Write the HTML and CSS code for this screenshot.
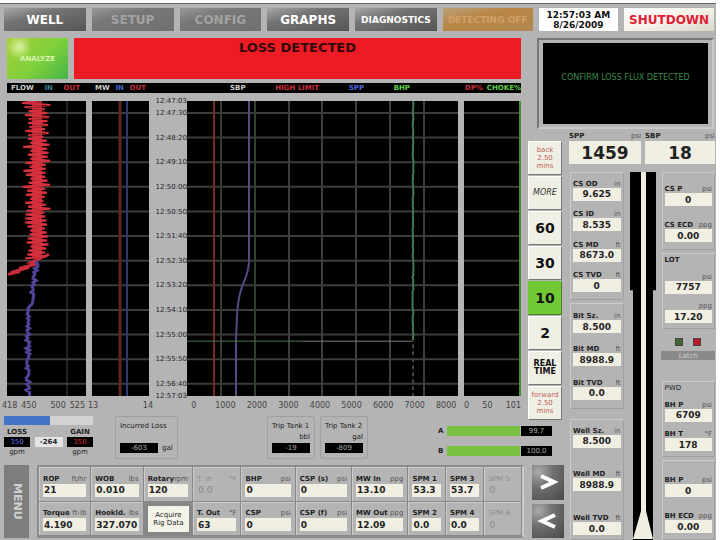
FILE: index.html
```html
<!DOCTYPE html>
<html lang="en">
<head>
<meta charset="utf-8">
<title>Drilling control – Graphs</title>
<link rel="stylesheet" href="styles.css">
</head>
<body>
<div class="app">
  <nav class="topbar">
    <button class="tab">WELL</button>
    <button class="tab dim">SETUP</button>
    <button class="tab dim">CONFIG</button>
    <button class="tab">GRAPHS</button>
    <button class="tab small">DIAGNOSTICS</button>
    <button class="tab small amber">DETECTING OFF</button>
    <time class="clock">12:57:03 AM<br>8/26/2009</time>
    <button class="tab shutdown">SHUTDOWN</button>
  </nav>

  <main class="main">
    <section class="graphs">
      <div class="banner">
        <button class="ack">ANALYZE</button>
        <h1 class="alert">LOSS DETECTED</h1>
      </div>
      <div class="legend columns">
        <div class="keys flow"><span>FLOW</span><span class="teal">IN</span><span class="red">OUT</span></div>
        <div class="keys mw"><span>MW</span><span class="blue">IN</span><span class="red">OUT</span></div>
        <div class="keys press"><span>SBP</span><span class="red">HIGH LIMIT</span><span class="blue">SPP</span><span class="green">BHP</span></div>
        <div class="keys choke"><span class="red">DP%</span><span class="green">CHOKE%</span></div>
      </div>
      <div class="plots columns">
        <svg class="plot flow" id="flow" viewBox="0 0 79 296" preserveAspectRatio="none"></svg>
        <svg class="plot mw" id="mw" viewBox="0 0 57 296" preserveAspectRatio="none"></svg>
        <div class="times">
          <span>12:47:03</span><span>12:47:30</span><span>12:48:20</span><span>12:49:10</span><span>12:50:00</span><span>12:50:50</span><span>12:51:40</span><span>12:52:30</span><span>12:53:20</span><span>12:54:10</span><span>12:55:00</span><span>12:55:50</span><span>12:56:40</span><span>12:57:03</span>
        </div>
        <svg class="plot press" id="press" viewBox="0 0 271 296" preserveAspectRatio="none"></svg>
        <svg class="plot choke" id="choke" viewBox="0 0 57 296" preserveAspectRatio="none"></svg>
      </div>
      <div class="axes columns">
        <div class="axis flow"><span>418</span><span class="second">450</span><span>500</span><span>525</span></div>
        <div class="axis mw"><span>13</span><span>14</span></div>
        <div class="axis press"><span>0</span><span>1000</span><span>2000</span><span>3000</span><span>4000</span><span>5000</span><span>6000</span><span>7000</span><span>8000</span></div>
        <div class="axis choke"><span>0</span><span>50</span><span>101</span></div>
      </div>
    </section>

    <div class="message"><p>CONFIRM LOSS FLUX DETECTED</p></div>

    <div class="scale">
      <button class="step jump">back<br>2.50<br>mins</button>
      <button class="step more">MORE</button>
      <button class="step">60</button>
      <button class="step">30</button>
      <button class="step on">10</button>
      <button class="step">2</button>
      <button class="step words">REAL<br>TIME</button>
      <button class="step jump">forward<br>2.50<br>mins</button>
    </div>

    <section class="status">
      <div class="balance">
        <div class="meter"><div class="fill"></div></div>
        <div class="trio heads"><b>LOSS</b><b></b><b>GAIN</b></div>
        <div class="trio"><span class="lcd blue">350</span><span class="lcd light">-264</span><span class="lcd red">350</span></div>
        <div class="trio"><span>gpm</span><span></span><span>gpm</span></div>
      </div>
      <div class="tank incurred"><span>Incurred Loss</span><div class="line"><span class="lcd">-603</span><span>gal</span></div></div>
      <div class="tank first"><span>Trip Tank 1</span><span class="unit">bbl</span><span class="lcd">-19</span></div>
      <div class="tank"><span>Trip Tank 2</span><span class="unit">gal</span><span class="lcd">-809</span></div>
      <div class="chokes">
        <div class="choke-row"><b>A</b><div class="level"></div><span class="lcd">99.7</span></div>
        <div class="choke-row"><b>B</b><div class="level"></div><span class="lcd">100.0</span></div>
      </div>
    </section>

    <section class="strip">
      <button class="menu">MENU</button>
      <div class="cells">
        <div class="field"><label for="rop">ROP</label><i>ft/hr</i><input id="rop" value="21"></div>
        <div class="field"><label for="wob">WOB</label><i>lbs</i><input id="wob" value="0.010"></div>
        <div class="field"><label for="rot">Rotary</label><i>rpm</i><input id="rot" value="120"></div>
        <div class="field off"><label for="tin">T. In</label><i>°F</i><input id="tin" value="0.0" disabled></div>
        <div class="field"><label for="bhp">BHP</label><i>psi</i><input id="bhp" value="0"></div>
        <div class="field"><label for="csps">CSP (s)</label><i>psi</i><input id="csps" value="0"></div>
        <div class="field"><label for="mwin">MW In</label><i>ppg</i><input id="mwin" value="13.10"></div>
        <div class="field"><label for="spm1">SPM 1</label><input id="spm1" value="53.3"></div>
        <div class="field"><label for="spm3">SPM 3</label><input id="spm3" value="53.7"></div>
        <div class="field off"><label for="spm5">SPM 5</label><input id="spm5" value="0" disabled></div>
        <div class="field"><label for="tor">Torque</label><i>ft-lb</i><input id="tor" value="4.190"></div>
        <div class="field"><label for="hook">Hookld.</label><i>lbs</i><input id="hook" value="327.070"></div>
        <button class="acquire">Acquire<br>Rig Data</button>
        <div class="field"><label for="tout">T. Out</label><i>°F</i><input id="tout" value="63"></div>
        <div class="field"><label for="csp">CSP</label><i>psi</i><input id="csp" value="0"></div>
        <div class="field"><label for="cspf">CSP (f)</label><i>psi</i><input id="cspf" value="0"></div>
        <div class="field"><label for="mwout">MW Out</label><i>ppg</i><input id="mwout" value="12.09"></div>
        <div class="field"><label for="spm2">SPM 2</label><input id="spm2" value="0.0"></div>
        <div class="field"><label for="spm4">SPM 4</label><input id="spm4" value="0.0"></div>
        <div class="field off"><label for="spm6">SPM 6</label><input id="spm6" value="0" disabled></div>
      </div>
      <div class="arrows">
        <button aria-label="Next"><svg viewBox="0 0 32 32"><path d="M9 10 22 16 9 22"/></svg></button>
        <button aria-label="Previous"><svg viewBox="0 0 32 32"><path d="M23 10 10 16 23 22"/></svg></button>
      </div>
    </section>

    <aside class="well">
      <div class="big">
        <div class="field"><label for="spp">SPP</label><i>psi</i><input id="spp" value="1459"></div>
        <div class="field"><label for="sbp">SBP</label><i>psi</i><input id="sbp" value="18"></div>
      </div>
      <div class="depths">
        <div class="side">
          <div class="group casing">
            <div class="field"><label for="csod">CS OD</label><i>in</i><input id="csod" value="9.625"></div>
            <div class="field"><label for="csid">CS ID</label><i>in</i><input id="csid" value="8.535"></div>
            <div class="field"><label for="csmd">CS MD</label><i>ft</i><input id="csmd" value="8673.0"></div>
            <div class="field"><label for="cstvd">CS TVD</label><i>ft</i><input id="cstvd" value="0"></div>
          </div>
          <div class="group bit">
            <div class="field"><label for="bsz">Bit Sz.</label><i>in</i><input id="bsz" value="8.500"></div>
            <div class="field"><label for="bmd">Bit MD</label><i>ft</i><input id="bmd" value="8988.9"></div>
            <div class="field"><label for="btvd">Bit TVD</label><i>ft</i><input id="btvd" value="0.0"></div>
          </div>
          <div class="group hole">
            <div class="field"><label for="wsz">Well Sz.</label><i>in</i><input id="wsz" value="8.500"></div>
            <div class="field"><label for="wmd">Well MD</label><i>ft</i><input id="wmd" value="8988.9"></div>
            <div class="field"><label for="wtvd">Well TVD</label><i>ft</i><input id="wtvd" value="0.0"></div>
          </div>
        </div>
        <svg class="bore" viewBox="0 0 28 367" preserveAspectRatio="none">
          <path fill="#000" d="M1 0H27V118H24V367H4V118H1Z"/>
          <path fill="#f0efe2" d="M12 0H17V338L24 366H4L12 338Z"/>
        </svg>
        <div class="side">
          <div class="group cs">
            <div class="field"><label for="csp2">CS P</label><i>psi</i><input id="csp2" value="0"></div>
            <div class="field"><label for="csecd">CS ECD</label><i>ppg</i><input id="csecd" value="0.00"></div>
          </div>
          <div class="group lot">
            <b>LOT</b>
            <div class="field"><label for="lot1"></label><i>psi</i><input id="lot1" aria-label="LOT pressure" value="7757"></div>
            <div class="field"><label for="lot2"></label><i>ppg</i><input id="lot2" aria-label="LOT density" value="17.20"></div>
          </div>
          <div class="leds"><span class="led go"></span><span class="led stop"></span><button class="latch">Latch</button></div>
          <div class="group pwd">
            <span>PWD</span>
            <div class="field"><label for="bhp1">BH P</label><i>psi</i><input id="bhp1" value="6709"></div>
            <div class="field"><label for="bht">BH T</label><i>°F</i><input id="bht" value="178"></div>
          </div>
          <div class="group bh">
            <div class="field"><label for="bhp2">BH P</label><i>psi</i><input id="bhp2" value="0"></div>
            <div class="field"><label for="bhecd">BH ECD</label><i>ppg</i><input id="bhecd" value="0.00"></div>
          </div>
        </div>
      </div>
    </aside>
  </main>
</div>
<script src="charts.js"></script>
</body>
</html>
```
FILE: styles.css
```css
* { box-sizing: border-box; }

body {
  margin: 0;
  background: #fff;
  font: 7px/8px "DejaVu Sans", Verdana, sans-serif;
  color: #222;
}

button, input {
  font: inherit;
  color: inherit;
  border: 0;
  border-radius: 0;
  margin: 0;
  padding: 0;
  min-width: 0;
}

svg { display: block; }
h1, p { margin: 0; }
i { font-style: normal; color: #555; }

.red { color: #c9303a; }
.blue { color: #4a68d0; }
.teal { color: #3a8098; }
.green { color: #5fd04a; }

.app {
  display: flex;
  flex-direction: column;
  min-height: 100vh;
  margin-right: 4px;
  background: #b4b4b4;
  border-top: 3px solid #fff;
}

/* top bar */
.topbar {
  display: grid;
  grid-template-columns: repeat(5, 82fr) 90fr 80fr 90fr;
  gap: 6px;
  padding: 4px 2px 0 4px;
  border-top: 1px solid #666;
}
.tab {
  height: 23px;
  background: linear-gradient(165deg, #a8a8a8, #747474 35%, #555);
  color: #fff;
  font-size: 12px;
  font-weight: bold;
}
.tab.dim { background: linear-gradient(165deg, #999, #777 35%, #707070); color: #a2a2a2; }
.tab.small { font-size: 9px; }
.tab.amber {
  background: linear-gradient(165deg, #bba078, #b88646 40%, #b38650);
  color: #cfa167;
}
.clock {
  background: #fff;
  color: #111;
  font-size: 9px;
  line-height: 10px;
  font-weight: bold;
  text-align: center;
  padding-top: 2px;
  white-space: nowrap;
}
.tab.shutdown {
  background: linear-gradient(165deg, #fff, #f5f2e8 50%, #d8d6c8);
  color: #e02035;
}

/* page areas */
.main {
  flex: 1;
  display: grid;
  grid-template-columns: 1fr 36px 148px;
  grid-template-rows: 94px 1fr 48px 77px;
  column-gap: 4px;
  padding: 7px 0 0 4px;
}
.graphs { grid-area: 1 / 1 / 3 / 2; display: flex; flex-direction: column; padding: 0 3px; }
.message { grid-area: 1 / 2 / 2 / 4; }
.scale { grid-area: 2 / 2 / 4 / 3; }
.status { grid-area: 3 / 1 / 4 / 3; }
.strip { grid-area: 4 / 1 / 5 / 3; }
.well { grid-area: 2 / 3 / 5 / 4; }

.banner { display: grid; grid-template-columns: 61px 1fr; gap: 6px; height: 41px; }
.ack {
  background: radial-gradient(circle at 20% 22%, #d8f0a0, transparent 22%), linear-gradient(135deg, #a5cf35, #7fd03c 55%, #45b548);
  color: #d8f5b0;
  font-weight: bold;
}
.alert {
  background: #ed1c24;
  color: #330a0a;
  font-size: 13px;
  line-height: 20px;
  text-align: center;
}

.columns { display: grid; grid-template-columns: 79fr 6px 57fr 38px 271fr 6px 57fr; }
.columns > * { grid-row: 1; min-width: 0; }
.flow { grid-column: 1; }
.mw { grid-column: 3; }
.times { grid-column: 4; }
.press { grid-column: 5; }
.choke { grid-column: 7; }

.legend {
  margin: 4px 0 8px;
  background: #000;
  color: #ccc;
  line-height: 10px;
  font-weight: bold;
}
.keys { display: flex; justify-content: space-between; white-space: nowrap; }
.keys.flow { padding: 0 6px 0 4px; }
.keys.mw { padding: 0 3px; }
.keys.press { padding: 0 48px 0 43px; }
.keys.choke { gap: 4px; justify-content: flex-end; }

.plots { flex: 1; min-height: 0; }
.plot { width: 100%; height: 100%; background: #000; contain: size; }
.plot path { fill: none; vector-effect: non-scaling-stroke; }
.times {
  display: grid;
  grid-template-rows: 12px repeat(11, 1fr) 12px 0;
  justify-content: end;
  line-height: 0;
}

.axes { height: 19px; font-size: 8px; line-height: 20px; color: #444; }
.axis { display: flex; justify-content: space-between; }
.axis.flow { margin: 0 1px 0 -5px; }
.axis .second { margin-right: 10px; }
.axis.mw { margin: 0 -4px; }
.axis.press {
  display: grid;
  grid-template-columns: repeat(9, minmax(0, 1fr));
  justify-items: center;
  margin: 0 -4px 0 -9px;
}

.message {
  margin: 0 2px 3px 9px;
  border: 2px solid;
  border-color: #777 #c8c8c8 #c8c8c8 #777;
  padding: 3px 4px;
}
.message p {
  height: 100%;
  padding-top: 28px;
  background: #000;
  color: #3a8a4a;
  font-size: 8px;
  line-height: 14px;
  text-align: center;
  white-space: nowrap;
}

/* time scale buttons */
.scale { padding: 9px 2px 0 0; display: flex; flex-direction: column; gap: 1px; }
.step {
  height: 34px;
  background: #f0efe4;
  border: 1px solid;
  border-color: #fff #777 #777 #fff;
  font-size: 14px;
  font-weight: bold;
  color: #111;
}
.step.on { background: #70c832; border-color: #70c832 #507f30 #507f30 #70c832; }
.step.jump { font-size: 7px; font-weight: normal; color: #c06058; }
.step.more { font-size: 8px; font-weight: normal; font-style: italic; color: #333; }
.step.words { font-size: 8px; }

/* status row */
.status { display: flex; align-items: flex-start; padding-top: 1px; }
.balance { width: 89px; margin-right: 22px; }
.meter { height: 9px; background: #d2d2d2; }
.fill { width: 52%; height: 100%; background: #4474c8; }
.trio { display: grid; grid-template-columns: 26px 28px 26px; justify-content: space-between; text-align: center; line-height: 10px; }
.heads { padding-top: 2px; }
.lcd { background: #000; color: #aaa; text-align: center; line-height: 10px; }
.lcd.blue { color: #6070e0; }
.lcd.red { color: #d02c34; }
.lcd.light { background: #e4e4e4; color: #222; font-weight: bold; }
.tank {
  display: flex;
  flex-direction: column;
  justify-content: space-between;
  width: 48px;
  height: 43px;
  margin-right: 5px;
  padding: 5px 4px;
  border: 1px solid #a0a0a0;
  border-radius: 2px;
  white-space: nowrap;
}
.tank.incurred { width: 63px; }
.tank.first { margin-left: 84px; }
.line { display: grid; grid-template-columns: 38px 1fr; gap: 4px; line-height: 10px; }
.unit { text-align: right; }
.chokes { flex: 1; padding: 10px 12px 0 65px; display: grid; gap: 10px; }
.choke-row { display: grid; grid-template-columns: 8px 1fr 31px; gap: 1px; line-height: 10px; }
.level { background: #7ac142; }

/* readouts */
.field { display: grid; grid-template-columns: auto 1fr; align-content: end; white-space: nowrap; min-width: 0; }
.field label { font-weight: bold; }
.field i { text-align: right; }
.field input {
  grid-column: 1 / -1;
  width: 100%;
  height: 13px;
  background: #f0efe2;
  color: #222;
  font-size: 9px;
  font-weight: bold;
}

/* data strip */
.strip { display: grid; grid-template-columns: 25px 1fr 32px; gap: 8px; padding: 2px 0 2px; }
.menu {
  background: #7d7d7d;
  color: #d0d0d0;
  font-size: 11px;
  font-weight: bold;
  writing-mode: vertical-rl;
}
.cells {
  display: grid;
  grid-template-columns: 53fr 53fr 50fr 49fr 55fr 57fr 57fr 38fr 39fr 38fr;
  grid-template-rows: 1fr 1fr;
  border: 2px solid #8c8c8c;
  border-right-color: #ccc;
}
.cells .field {
  padding: 0 4px 4px;
  border-right: 1px solid #888;
  border-bottom: 1px solid #888;
  box-shadow: inset 1px 1px #ccc;
}
.cells .field input { margin-top: 1px; padding-left: 1px; }
.cells .off, .cells .off i { color: #8c8c8c; }
.cells .off label { font-weight: normal; }
.cells .off input { background: none; color: #888; font-weight: normal; }
.acquire { background: #f5f4e8; border: 4px solid #888; white-space: nowrap; }
.arrows { display: grid; gap: 4px; }
.arrows button { background: radial-gradient(circle at 20% 20%, #aaa, #707070 40%, #484848); }
.arrows svg { width: 32px; height: 32px; }
.arrows path { fill: none; stroke: #fff; stroke-width: 4; }

/* well column */
.well { display: flex; flex-direction: column; }
.big { display: grid; grid-template-columns: 72fr 70fr; gap: 4px; padding: 0 1px; }
.big .field input { height: 23px; font-size: 17px; text-align: center; margin-top: 1px; }
.depths { flex: 1; display: grid; grid-template-columns: 53fr 28px 53fr; gap: 5px; padding: 8px 1px 0 2px; }
.side { display: flex; flex-direction: column; gap: 3px; min-width: 0; }
.group {
  flex: 1 1 0;
  display: flex;
  flex-direction: column;
  justify-content: space-around;
  padding: 2px;
  border: 1px solid;
  border-color: #ccc #a0a0a0 #a0a0a0 #ccc;
}
.group input { text-align: center; }
.casing { flex-grow: 123; }
.bit { flex-grow: 100; }
.hole { flex-grow: 109; margin-top: 7px; justify-content: space-between; padding: 7px 2px 4px; }
.cs { flex-grow: 57; justify-content: space-between; padding: 12px 2px 7px; }
.lot, .pwd { flex-grow: 67; justify-content: space-between; padding-bottom: 5px; }
.bh { flex-grow: 57; justify-content: space-between; padding: 15px 2px 6px; }
.bore { width: 100%; height: 100%; contain: size; }
.leds {
  display: grid;
  grid-template-columns: 8px 8px;
  gap: 5px 10px;
  justify-content: center;
  padding: 6px 0 18px;
}
.led { height: 8px; border: 1px solid #444; }
.go { background: #3f6a30; }
.stop { background: #c0182a; }
.latch { grid-column: 1 / -1; width: 54px; height: 9px; margin: 0 -14px; background: #8a8a8a; color: #d0d0d0; }
```
FILE: charts.js
```js
// Draws the history traces. Coordinates are in each plot's viewBox units.
const ROWS = Array.from({ length: 12 }, (_, i) => 12 + i * 24.7);

function add(id, d, color, width = 1, dash = "") {
  const p = document.createElementNS("http://www.w3.org/2000/svg", "path");
  p.setAttribute("d", d);
  p.setAttribute("stroke", color);
  p.setAttribute("stroke-width", width);
  if (dash) p.setAttribute("stroke-dasharray", dash);
  document.getElementById(id).append(p);
}

let seed = 7;
function noise() {
  seed = (seed * 16807) % 2147483647;
  return seed / 2147483647;
}

for (const [id, w] of [["flow", 79], ["mw", 57], ["press", 271], ["choke", 57]]) {
  add(id, ROWS.map(y => `M0 ${y}H${w}`).join(""), "#3c3c3c", 2);
}

// flow out, swinging about its mean until the loss begins
let out = "M30 0";
for (let y = 2, k = 0; y < 160; y += 2, k++) {
  out += `L${k % 2 ? 36 + noise() * 8 : 15 + noise() * 9} ${y}`;
}
add("flow", "M60 0V296", "#444");
add("flow", "M30 0V158", "#9c2530", 10);
add("flow", out, "#d8303c", 2);
add("flow", "M42 154L24 162L31 163L12 168L22 167L4 172L13 171L1 174", "#c82c38", 3);

let inn = "M28 161";
for (let y = 162; y <= 296; y += 2) {
  const mean = y < 220 ? 30 - (y - 162) * 0.15 : 21;
  inn += `L${mean + noise() * 4 - 2} ${y}`;
}
add("flow", inn, "#4f4498", 3);

add("mw", "M28 0V296", "#5a2820", 3);
add("mw", "M35 0V296", "#2b3a74", 2);

add("press", "M34 0V296M68 0V296", "#323f2e", 2);
add("press", "M102 0V296M135 0V296M169 0V296M203 0V296M237 0V296", "#3e3e3e", 2);
add("press", "M27 0V296", "#742c27", 2);
add("press", "M62 0V160C62 180 52 180 50 215L49 240V296", "#544a84", 2);
add("press", "M0 241H115", "#477344");
add("press", "M115 241H226", "#777");
let bhp = "M226 0";
for (let y = 3; y <= 241; y += 3) bhp += `L${225.5 + noise()} ${y}`;
add("press", bhp, "#427a50", 2);
add("press", "M226 244V296", "#444", 2, "4 3");
add("choke", "M56 0V296", "#4d8a35", 2);
```
